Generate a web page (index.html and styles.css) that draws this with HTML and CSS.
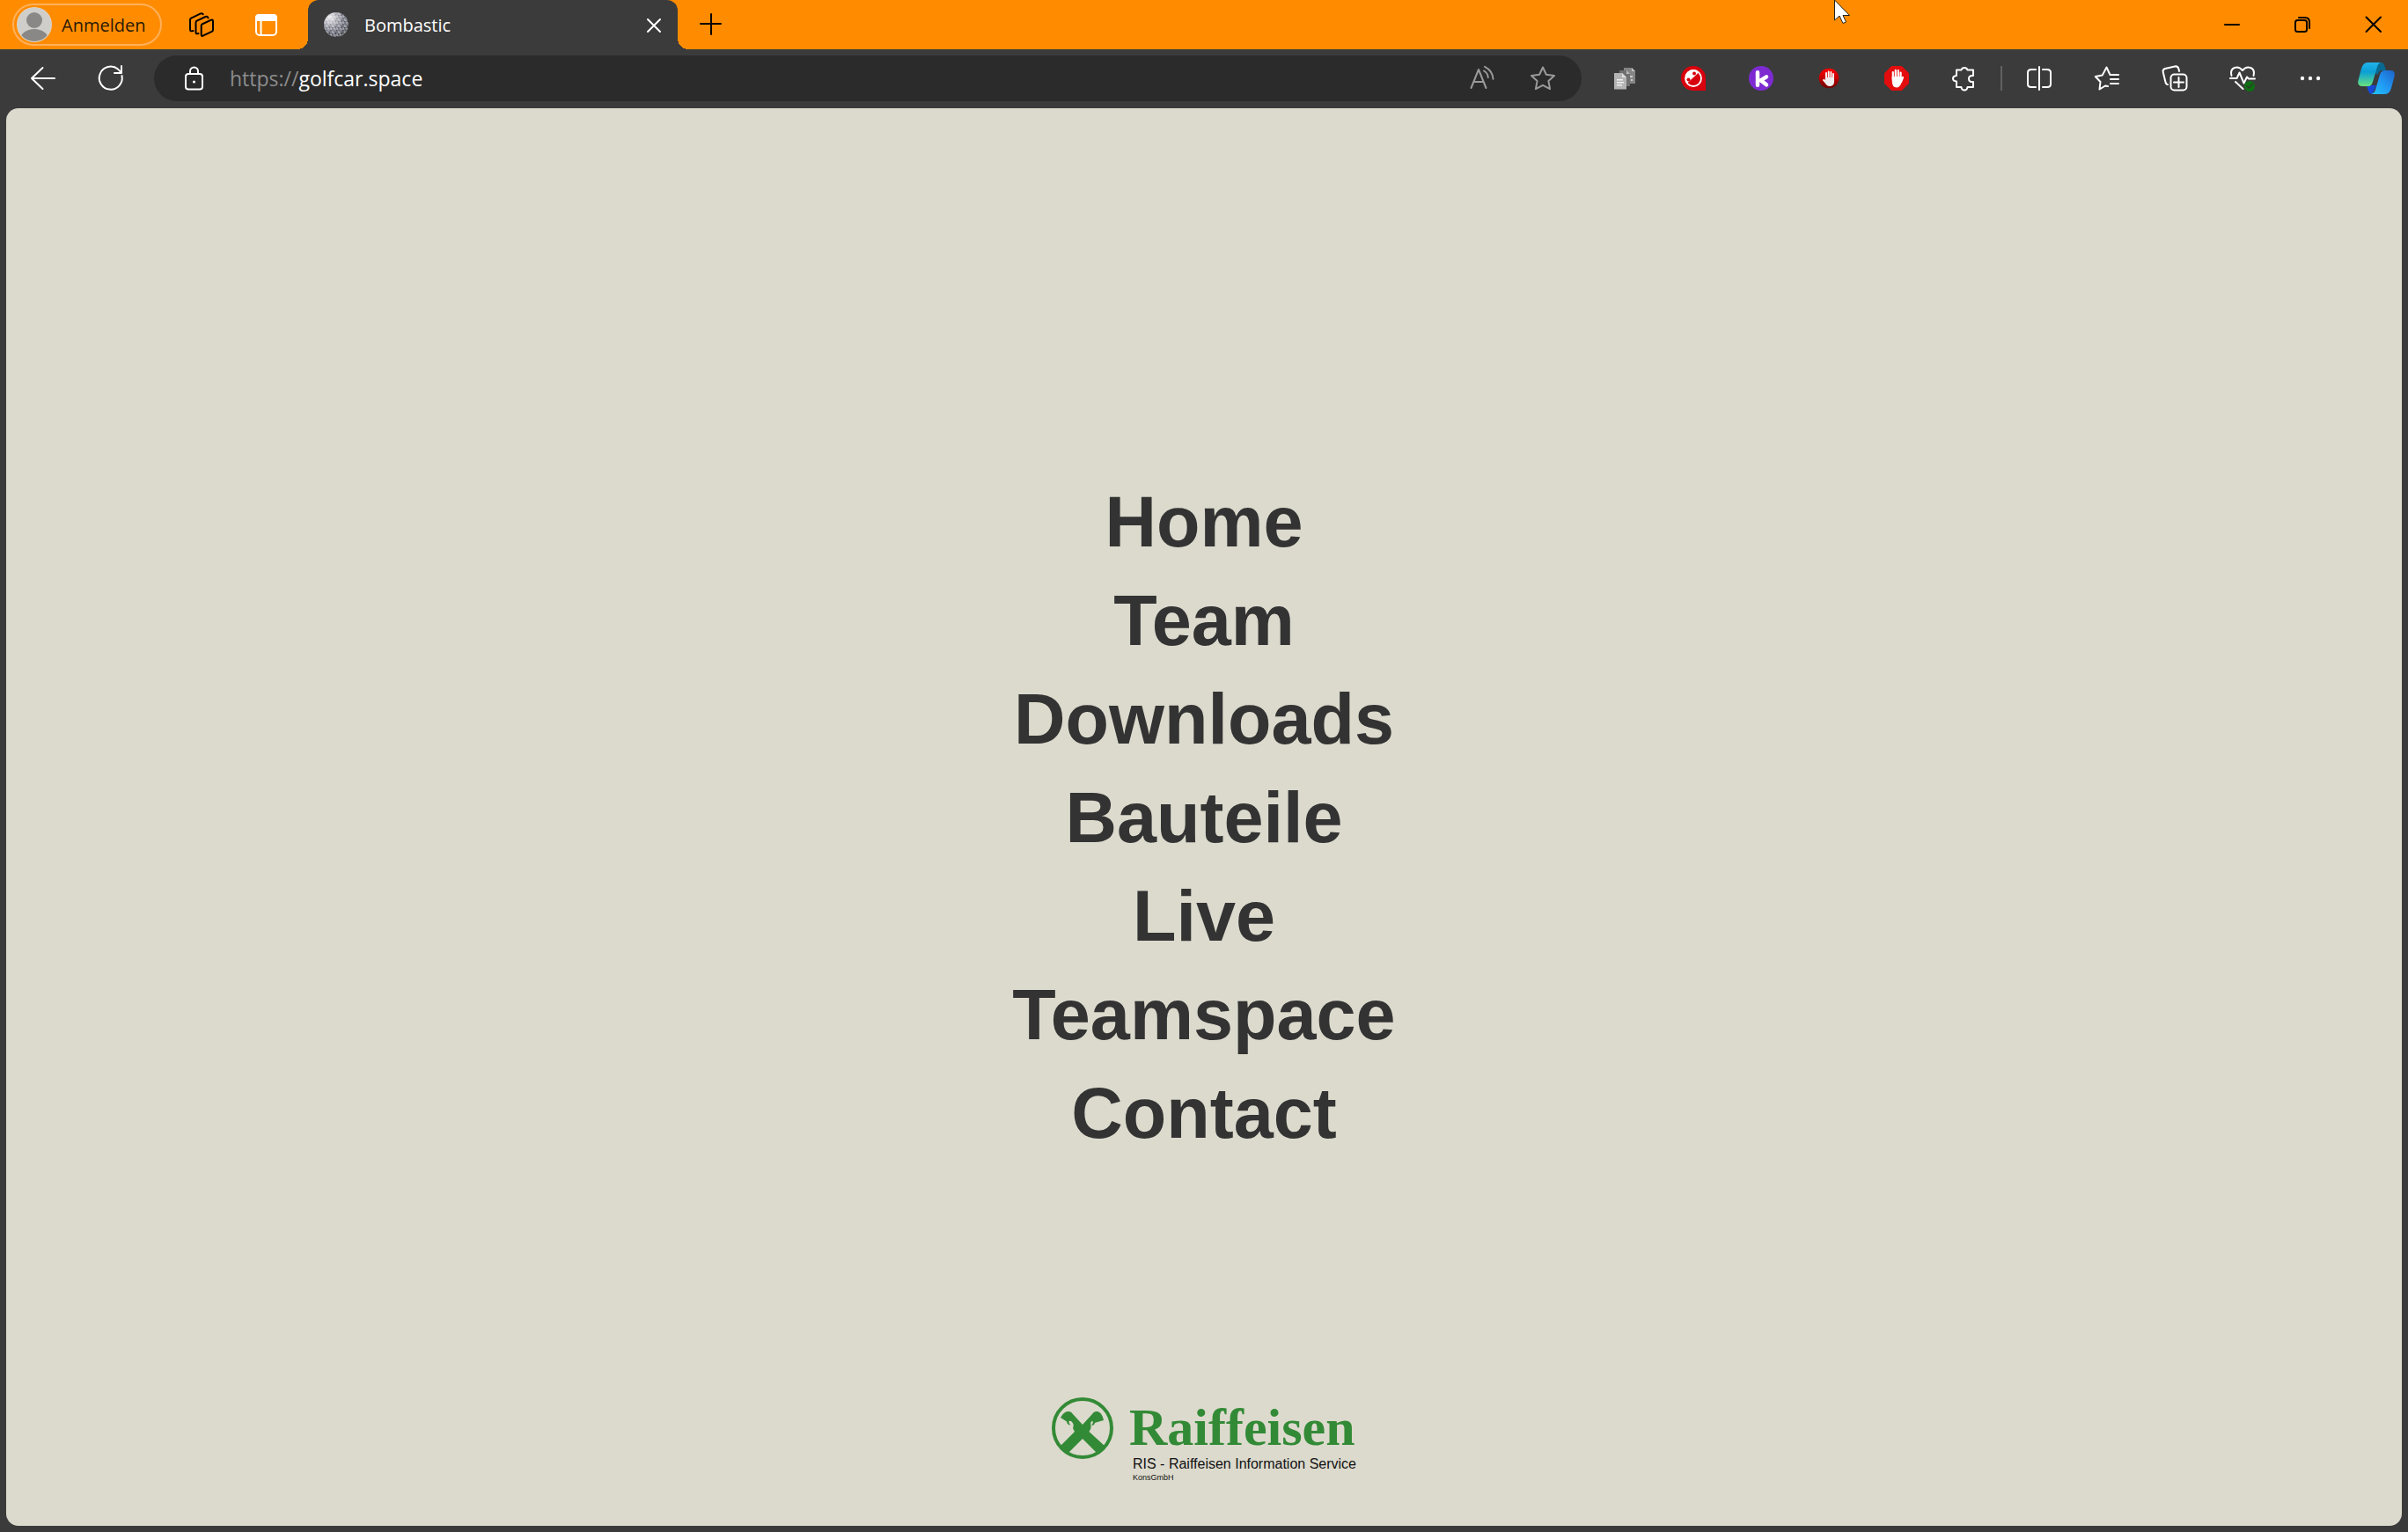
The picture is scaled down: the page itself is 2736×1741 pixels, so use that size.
FILE: index.html
```html
<!DOCTYPE html>
<html lang="de">
<head>
<meta charset="utf-8">
<meta name="viewport" content="width=device-width, initial-scale=1">
<title>Bombastic</title>
<link rel="stylesheet" href="styles.css">
</head>
<body>
<header class="browser">
  <div class="tabstrip">
    <button class="profile" type="button">
      <svg class="avatar" viewBox="0 0 40 40" aria-hidden="true">
        <defs><clipPath id="avatar-clip"><circle cx="20" cy="20" r="19"/></clipPath></defs>
        <circle cx="20" cy="20" r="20" fill="#dcd4c8"/>
        <circle cx="20" cy="20" r="19" fill="#d0cecb"/>
        <g clip-path="url(#avatar-clip)" fill="#8a8886"><circle cx="20" cy="15" r="9"/><ellipse cx="20" cy="37" rx="16" ry="12"/></g>
      </svg>
      <span>Anmelden</span>
    </button>
    <button class="strip-button dark" type="button" aria-label="Arbeitsbereiche">
      <svg class="icon" viewBox="0 0 28 28"><path d="M14.5 13.5 25 8.7q2-.8 2 1.400v9.800q0 1.300-1.300 1.900L15.500 26.700q-1.800.7-1.800-1.200v-10.500q0-1 .8-1.500zM10.500 24q-3 1-3-1V11.500q0-1.200 1.200-1.800L18.500 5q2.500-1 3 1.500M4.500 21q-3.500 1.200-3.500-1.500V8.500q0-1.200 1.200-1.800L12.500 1.600q2-1 3.200.6"/></svg>
    </button>
    <button class="strip-button light" type="button" aria-label="Tab-Aktionen">
      <svg class="icon" viewBox="0 0 28 28"><rect x="2" y="3" width="23" height="23" rx="4"/><path d="M2 9V6q0-3 3-3h17q3 0 3 3v3z" fill="currentColor"/><path d="M7.500 9v17"/></svg>
    </button>
    <div class="tab">
      <svg class="icon" viewBox="0 0 28 28" aria-hidden="true">
        <defs>
          <radialGradient id="moon" cx=".25" cy=".2" r=".85"><stop offset="0" stop-color="#e6e6ea"/><stop offset=".3" stop-color="#a4a4ae"/><stop offset=".65" stop-color="#5a5a6a"/><stop offset="1" stop-color="#34343f"/></radialGradient>
          <pattern id="craters" width="7" height="7" patternUnits="userSpaceOnUse"><path d="M1 1h1v1H1zM4 3h1v1H4zM2 5h1v1H2zM6 0h1v1H6z" fill="#fff" opacity=".25"/><path d="M3 1h1v1H3zM0 4h1v1H0zM5 5h1v1H5z" fill="#223" opacity=".4"/></pattern>
        </defs>
        <circle cx="14" cy="14" r="14" fill="url(#moon)" stroke="none"/><circle cx="14" cy="14" r="14" fill="url(#craters)" stroke="none"/>
      </svg>
      <span class="tab-title">Bombastic</span>
      <button class="tab-close" type="button" aria-label="Tab schließen"><svg class="icon" viewBox="0 0 28 28"><path d="m7 8 14 14M21 8 7 22"/></svg></button>
    </div>
    <button class="strip-button dark new-tab" type="button" aria-label="Neuer Tab"><svg class="icon" viewBox="0 0 28 28"><path d="M15 2v23M3 13h23"/></svg></button>
    <div class="window-controls">
      <button class="window-button" type="button" aria-label="Minimieren"><svg class="icon" viewBox="0 0 28 28"><path d="M6 14h16"/></svg></button>
      <button class="window-button" type="button" aria-label="Verkleinern"><svg class="icon" viewBox="0 0 28 28"><rect x="6" y="9" width="13" height="13" rx="2.500"/><path d="M10 6h7q5 0 5 5v7"/></svg></button>
      <button class="window-button" type="button" aria-label="Schließen"><svg class="icon" viewBox="0 0 28 28"><path d="m6.500 5.500 16.500 16.500M23 5.500 6.500 22"/></svg></button>
    </div>
  </div>

  <div class="toolbar">
    <button class="tool" type="button" aria-label="Zurück"><svg class="icon" viewBox="0 0 28 28"><path d="M13.500 2 1 14l12.500 12M1 14h26"/></svg></button>
    <button class="tool" type="button" aria-label="Aktualisieren"><svg class="icon" viewBox="0 0 28 28"><path d="M26.500 11A13 13 0 1 1 22 3.600l4 4M26 0v8h-8"/></svg></button>
    <form class="address">
      <button class="address-lock" type="button" aria-label="Websiteinformationen"><svg class="icon" viewBox="0 0 28 28"><rect x="5" y="9" width="19" height="17.500" rx="3"/><path d="M10 9V6a4.500 4.500 0 0 1 9 0v3"/><circle cx="14.500" cy="18" r="1.600" fill="currentColor" stroke="none"/></svg></button>
      <label class="scheme" for="url">https://</label>
      <input class="url" id="url" type="text" value="golfcar.space" spellcheck="false">
      <button class="address-button" type="button" aria-label="Vorlesen"><svg class="icon" viewBox="0 0 28 28"><path d="m2.500 25 8.500-21 8.500 21M5.500 18h11M17 5.500q4.500 2.500 4.800 7.500M18 .8q9 4.500 9.500 14"/></svg></button>
      <button class="address-button" type="button" aria-label="Favorit"><svg class="icon" viewBox="0 0 28 28"><path d="m14 1.500 3.900 8.200 9.100 1.200-6.600 6.200 1.700 9L14 21.800 5.900 26.100l1.700-9L1 10.900l9.100-1.200z"/></svg></button>
    </form>
    <div class="tools">
      <button class="tool" type="button" aria-label="Dokumente"><svg class="icon" viewBox="0 0 28 28" stroke="none"><path d="M12 2h9l4 4v14H12z" fill="#858585"/><path d="M21 2v4h4z" fill="#c4c4c4"/><path d="M7 5h8l4 4v14H7z" fill="#707070"/><path d="M15 5v4h4z" fill="#bbb"/><path d="M1 8h9l5 5v13.500H1z" fill="#b4b4b4"/><path d="M10 8v5h5z" fill="#ddd"/><path d="M4 15h7v1.500H4zM4 18h8v1.500H4zM4 21h6v1.500H4z" fill="#eee"/><path d="M19 11h3v2h-3zM20 15h2v2h-2z" fill="#ccc"/></svg></button>
      <button class="tool" type="button" aria-label="Erweiterung"><svg class="icon" viewBox="0 0 28 28" stroke="none"><path d="M14 0a14 14 0 0 1 14 14v14H14A14 14 0 0 1 14 0z" fill="#d9000d"/><circle cx="14" cy="14" r="9" fill="none" stroke="#fff" stroke-width="1.800"/><path d="M7 19.500 20.500 7A9 9 0 0 0 5 14q0 3 2 5.500z" fill="#fff"/><circle cx="8.500" cy="15.500" r="2" fill="#d9000d"/><circle cx="15" cy="8.500" r="2" fill="#d9000d"/></svg></button>
      <button class="tool" type="button" aria-label="Klarna"><svg class="icon" viewBox="0 0 28 28" stroke="none"><circle cx="14" cy="14" r="14" fill="#7d2bd1"/><path d="M10 7.300v14.400M20 12.300l-6.500 4 6.500 5" fill="none" stroke="#fff" stroke-width="4.500" stroke-linejoin="round" stroke-linecap="round"/></svg></button>
      <button class="tool" type="button" aria-label="Blocker"><svg class="icon" viewBox="0 0 28 28" stroke="none"><defs><linearGradient id="stop" x2="0" y2="1"><stop stop-color="#f00"/><stop offset=".45" stop-color="#c80000"/><stop offset="1" stop-color="#6b0000"/></linearGradient></defs><circle cx="14" cy="14" r="11.300" fill="url(#stop)"/><path d="M11 15V8M13.700 14V6.500M16.400 14V7M19 15V9M8 16l3 3" stroke="#fff" stroke-width="1.900" stroke-linecap="round"/><path d="M10 13h10v6q-1 4-5 4t-6-5z" fill="#eee"/></svg></button>
      <button class="tool" type="button" aria-label="AdBlock"><svg class="icon" viewBox="0 0 28 28" stroke="none"><path d="M8.200 0h11.600L28 8.200v11.600L19.800 28H8.200L0 19.800V8.200z" fill="#e40d0d"/><path d="M9.800 15V7M12.800 14V4.800M15.800 14V5M18.600 15V7.500M21 13l-2 5" stroke="#fff" stroke-width="2.200" stroke-linecap="round"/><path d="M8.700 12h11l.4 4q-1.500 8.500-6 8.500-5.400 0-5.400-8z" fill="#fff"/></svg></button>
      <button class="tool" type="button" aria-label="Erweiterungen"><svg class="icon" viewBox="0 0 28 28"><path d="M5 4.500h5.500a3.700 3.700 0 0 1 7 0H24v6.500q-5-.5-5 3.500t5 3.500V24h-6.500a3.500 3.500 0 0 1-7 0H5v-6.500q-4-.3-4-3.200t4-3.300z"/></svg></button>
      <span class="separator"></span>
      <button class="tool" type="button" aria-label="Geteilter Bildschirm"><svg class="icon" viewBox="0 0 28 28"><path d="M10 4H5Q1 4 1 7.500v13Q1 24 5 24h5M18 4h5q4 0 4 3.500v13q0 3.500-4 3.500h-5M14 1v26"/></svg></button>
      <button class="tool" type="button" aria-label="Favoriten"><svg class="icon" viewBox="0 0 28 28"><path d="M15 23 12 22.500 5.500 26.500 6.500 18 .8 12l8-1.600L13.500 1.500l4 8.500M18 10h9M18 15h9M18 20h9"/></svg></button>
      <button class="tool" type="button" aria-label="Sammlungen"><svg class="icon" viewBox="0 0 28 28"><path d="M6 21q-2 0-2.600-3L.7 7Q0 4 3 3l11-2.500q3.500-.8 4.500 3L19 6"/><rect x="9.500" y="9.500" width="18" height="18" rx="4"/><path d="M18.500 13v11M13 18.500h11"/></svg></button>
      <button class="tool" type="button" aria-label="Browser-Essentials"><svg class="icon" viewBox="0 0 28 28"><path d="M1.500 11C-1 1 9-1 14 5c5-6 15-4 12.500 6M0 14h7.500L10.500 7.500l5 12 3.500-7 2 2h7M6 18l8.500 8"/><circle cx="22" cy="23" r="6" fill="#0d6f12" stroke="none"/><path d="m19 23 2 2 4.500-4.500" stroke="#2b3b2b" stroke-width="1.500"/></svg></button>
      <button class="tool" type="button" aria-label="Einstellungen und mehr"><svg class="icon" viewBox="0 0 28 28" stroke="none" fill="currentColor"><circle cx="5" cy="14" r="2.200"/><circle cx="14" cy="14" r="2.200"/><circle cx="23" cy="14" r="2.200"/></svg></button>
      <button class="copilot" type="button" aria-label="Copilot"><svg class="copilot-icon" viewBox="0 0 42 38" stroke="none">
        <defs>
          <linearGradient id="co-a" x2="0" y2="1"><stop stop-color="#21b3e8"/><stop offset=".4" stop-color="#0aa0d6"/><stop offset="1" stop-color="#68e07e"/></linearGradient>
          <linearGradient id="co-b" x1="1" x2="0" y2="1"><stop stop-color="#1d62c8"/><stop offset=".5" stop-color="#2196f3"/><stop offset="1" stop-color="#1fc8f6"/></linearGradient>
        </defs>
        <path d="M23 1h3q3.500 0 4.500 4l1.500 5h-4q-4 0-5.500 5L18 12z" fill="#096a91"/>
        <path d="M10 27h11l-4 9q-3 2-5-2z" fill="#1647d8"/>
        <path d="M11 1h15q-3 1-4 5l-5 17q-1.500 5-5 5H5q-6 0-4.500-7L4 8Q6 1 11 1z" fill="url(#co-a)"/>
        <path d="M31 10h6q6 0 4.500 7L38 30q-2 7-7 7H15q4-1 5-5l5-17q1.500-5 6-5z" fill="url(#co-b)"/>
      </svg></button>
    </div>
  </div>
</header>

<main class="page">
  <nav class="menu">
    <a href="#home">Home</a>
    <a href="#team">Team</a>
    <a href="#downloads">Downloads</a>
    <a href="#bauteile">Bauteile</a>
    <a href="#live">Live</a>
    <a href="#teamspace">Teamspace</a>
    <a href="#contact">Contact</a>
  </nav>
  <footer class="sponsor">
    <svg class="sponsor-mark" viewBox="0 0 70 70" aria-hidden="true">
      <circle cx="35" cy="35" r="33" fill="none" stroke="#338a36" stroke-width="4"/>
      <path fill="#338a36" d="M9 56 26 39 24 35Q26 30 22 27q-3-1-2.500 1 .2 2 2 3.500-4 0-4.500-4L10 23q3-6 8-7 4-.5 6 3L35 31 46 19q2-3.500 6-3 5 1 7 10l-7 2-3 1q-.5 3-4 3 2.500-3 1.500-5-3 0-2 5l0 3-2 4L61 56l-9 8L35 47 18 64z"/>
    </svg>
    <div class="sponsor-text">
      <span class="sponsor-name">Raiffeisen</span>
      <span class="sponsor-sub">RIS - Raiffeisen Information Service</span>
      <span class="sponsor-legal">KonsGmbH</span>
    </div>
  </footer>
</main>
<svg class="cursor" viewBox="0 0 18 27" aria-hidden="true"><path d="M.5 0v23l5.500-5 4 8.500 3.500-1.500-3.500-7.500h7.500z" fill="#fff" stroke="#222"/></svg>
</body>
</html>
```

FILE: styles.css
```css
* { box-sizing: border-box; }

body {
  margin: 0;
  min-height: 100vh;
  display: flex;
  flex-direction: column;
  background: #3b3b3b;
  color: #fff;
  font-family: "Open Sans", "Noto Sans", sans-serif;
}

button {
  display: flex;
  align-items: center;
  justify-content: center;
  flex: none;
  margin: 0;
  padding: 0;
  border: 0;
  background: none;
  color: inherit;
  font: inherit;
}

.icon {
  display: block;
  flex: none;
  width: 28px;
  height: 28px;
  overflow: visible;
}

.icon:not([stroke]) {
  fill: none;
  stroke: currentColor;
  stroke-width: 2;
  stroke-linecap: round;
  stroke-linejoin: round;
}

/* Tab strip */
.tabstrip {
  display: flex;
  align-items: center;
  height: 56px;
  padding-left: 14px;
  background: #ff8c00;
}

.profile {
  gap: 11px;
  width: 170px;
  height: 48px;
  margin-right: 8px;
  padding-left: 3px;
  justify-content: flex-start;
  border: 2px solid #ffb05c;
  border-radius: 24px;
  color: #2b1a06;
  font-size: 20px;
}

.avatar { width: 40px; height: 40px; }

.strip-button { width: 74px; height: 56px; }
.dark { color: #000; }
.light { color: #fff; }

.tab {
  position: relative;
  display: flex;
  align-items: center;
  width: 420px;
  height: 56px;
  margin-left: 10px;
  padding: 0 13px 0 18px;
  border-radius: 12px 12px 0 0;
  background: #3b3b3b;
  font-size: 20px;
}

.tab::before,
.tab::after {
  content: "";
  position: absolute;
  bottom: 0;
  width: 12px;
  height: 12px;
}

.tab::before {
  right: 100%;
  background: radial-gradient(circle at 0 0, transparent 12px, #3b3b3b 12px);
}

.tab::after {
  left: 100%;
  background: radial-gradient(circle at 100% 0, transparent 12px, #3b3b3b 12px);
}

.tab-title { flex: 1; margin-left: 18px; }

.window-controls { display: flex; margin-left: auto; }
.window-button { width: 80px; height: 56px; color: #000; }

/* Toolbar */
.toolbar {
  display: flex;
  align-items: center;
  height: 67px;
  padding: 0 0 2px 10px;
}

.tool { width: 77px; height: 52px; }

.address {
  display: flex;
  flex: 1;
  align-items: center;
  height: 52px;
  margin: 0 11px;
  padding: 0 9px 0 10px;
  border-radius: 26px;
  background: #2b2b2b;
  font-size: 23px;
}

.address-lock { width: 70px; height: 52px; margin-right: 6px; }
.scheme { color: #8c8c8c; }

.url {
  flex: 1;
  min-width: 0;
  padding: 0;
  border: 0;
  outline: 0;
  background: none;
  color: #fff;
  font: inherit;
}

.address-button { width: 70px; height: 52px; color: #9a9a9a; }

.tools { display: flex; align-items: center; }
.separator { width: 2px; height: 28px; margin: 0 3px; background: #616161; }
.copilot { width: 73px; height: 52px; }
.copilot-icon { width: 42px; height: 38px; }

/* Page */
.page {
  display: grid;
  flex: 1;
  grid-template-rows: 1fr auto 1fr;
  justify-items: center;
  margin: 0 7px 7px;
  border-radius: 14px;
  background: #dcdacd;
}

.menu {
  grid-row: 2;
  display: flex;
  flex-direction: column;
  align-items: center;
  gap: 16px;
  font-family: "Liberation Sans", Arial, sans-serif;
  font-size: 81px;
  font-weight: bold;
  line-height: 96px;
}

.menu a { color: #333; text-decoration: none; }

.sponsor {
  grid-row: 3;
  align-self: end;
  display: flex;
  gap: 18px;
  padding-bottom: 48px;
}

.sponsor-mark { width: 70px; height: 70px; }

.sponsor-text {
  display: flex;
  flex-direction: column;
  color: #111;
  font-family: "Liberation Sans", Arial, sans-serif;
}

.sponsor-name {
  color: #338a36;
  font-family: "Liberation Serif", serif;
  font-size: 60px;
  font-weight: bold;
  line-height: 68px;
}

.sponsor-sub { padding-left: 4px; font-size: 16px; line-height: 16px; }
.sponsor-legal { padding-left: 4px; font-size: 9px; line-height: 14px; }

/* Mouse pointer over the title bar */
.cursor {
  position: absolute;
  top: 0;
  left: 2084px;
  width: 18px;
  height: 27px;
}
```
